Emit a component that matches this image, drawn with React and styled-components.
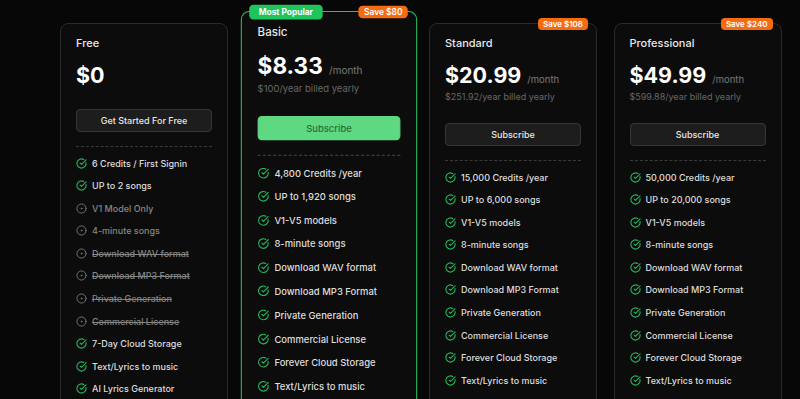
import React from 'react';
import styled, { createGlobalStyle } from 'styled-components';
import { CircleCheckBig, CircleDot } from 'lucide-react';

const plans = [
  {
    name: 'Free',
    price: '$0',
    button: 'Get Started For Free',
    features: [
      ['6 Credits / First Signin', 'yes'],
      ['UP to 2 songs', 'yes'],
      ['V1 Model Only', 'limited'],
      ['4-minute songs', 'limited'],
      ['Download WAV format', 'no'],
      ['Download MP3 Format', 'no'],
      ['Private Generation', 'no'],
      ['Commercial License', 'no'],
      ['7-Day Cloud Storage', 'yes'],
      ['Text/Lyrics to music', 'yes'],
      ['AI Lyrics Generator', 'yes']
    ]
  },
  {
    name: 'Basic',
    price: '$8.33',
    yearly: '$100/year billed yearly',
    save: 'Save $80',
    popular: true,
    button: 'Subscribe',
    credits: '4,800 Credits /year',
    songs: 'UP to 1,920 songs'
  },
  {
    name: 'Standard',
    price: '$20.99',
    yearly: '$251.92/year billed yearly',
    save: 'Save $108',
    button: 'Subscribe',
    credits: '15,000 Credits /year',
    songs: 'UP to 6,000 songs'
  },
  {
    name: 'Professional',
    price: '$49.99',
    yearly: '$599.88/year billed yearly',
    save: 'Save $240',
    button: 'Subscribe',
    credits: '50,000 Credits /year',
    songs: 'UP to 20,000 songs'
  }
];

// rows past the fold are left out
const paidFeatures = p => [
  [p.credits, 'yes'],
  [p.songs, 'yes'],
  ['V1-V5 models', 'yes'],
  ['8-minute songs', 'yes'],
  ['Download WAV format', 'yes'],
  ['Download MP3 Format', 'yes'],
  ['Private Generation', 'yes'],
  ['Commercial License', 'yes'],
  ['Forever Cloud Storage', 'yes'],
  ['Text/Lyrics to music', 'yes']
];

export default function App() {
  return (
    <>
      <GlobalStyle />
      <Page>
        {plans.map(p => (
          <Card key={p.name} popular={p.popular}>
            {p.popular && <PopularBadge>Most Popular</PopularBadge>}
            {p.save && <SaveBadge>{p.save}</SaveBadge>}
            <PlanName>{p.name}</PlanName>
            <PriceRow>
              <Price>{p.price}</Price>
              {p.yearly && <Per>/month</Per>}
            </PriceRow>
            {p.yearly && <Yearly>{p.yearly}</Yearly>}
            <Button primary={p.popular}>{p.button}</Button>
            <Divider />
            <Features>
              {(p.features || paidFeatures(p)).map(([text, state]) => (
                <Feature key={text} state={state}>
                  {state === 'yes' ? (
                    <CircleCheckBig size={11} strokeWidth={2.4} color="#25b35c" />
                  ) : (
                    <CircleDot size={11} strokeWidth={2} color="#7a7a7a" />
                  )}
                  <span>{text}</span>
                </Feature>
              ))}
            </Features>
          </Card>
        ))}
      </Page>
    </>
  );
}

const GlobalStyle = createGlobalStyle`
  html, body {
    margin: 0;
    background: #070707;
    font-family: Inter, "Noto Sans", sans-serif;
    overflow: hidden;
  }
`;

const Page = styled.div`
  display: flex;
  align-items: flex-start;
  gap: 16.5px;
  padding: 23px 0 0 60px;
  height: 399px;
  box-sizing: border-box;
  overflow: hidden;
`;

const Card = styled.div`
  position: relative;
  flex: 0 0 168px;
  box-sizing: border-box;
  height: 460px;
  padding: 10px 15px 0;
  border-radius: 8px;
  background: #0c0c0c;
  border: 1px solid ${props => (props.popular ? '#2fbf5e' : '#2a2a2a')};
  ${props =>
    props.popular &&
    `
    transform: translateY(-12px) scale(1.05);
    transform-origin: top center;
  `}
`;

const Badge = styled.div`
  position: absolute;
  top: -7px;
  height: 13px;
  padding: 0 5px;
  border-radius: 4px;
  color: #fff;
  font-size: 8px;
  font-weight: 600;
  line-height: 13px;
  white-space: nowrap;
`;

const PopularBadge = styled(Badge)`
  left: 7px;
  height: 14px;
  line-height: 14px;
  padding: 0 9px;
  background: #1fc45a;
  font-weight: 700;
`;

const SaveBadge = styled(Badge)`
  right: 8px;
  top: -6px;
  height: 12px;
  line-height: 12px;
  background: #f56b10;
`;

const PlanName = styled.div`
  color: #e8e8e8;
  font-size: 11px;
  font-weight: 500;
  line-height: 18px;
`;

const PriceRow = styled.div`
  display: flex;
  align-items: baseline;
  gap: 6px;
  margin-top: 8px;
  height: 30px;
`;

const Price = styled.span`
  color: #fff;
  font-size: 21.5px;
  font-weight: 700;
  line-height: 30px;
`;

const Per = styled.span`
  color: #7a7a7a;
  font-size: 9.5px;
`;

const Yearly = styled.div`
  color: #676767;
  font-size: 9px;
  line-height: 14px;
`;

const Button = styled.div`
  margin-top: 19px;
  height: 23px;
  box-sizing: border-box;
  display: flex;
  align-items: center;
  justify-content: center;
  border-radius: 4px;
  font-size: 9px;
  font-weight: 500;
  background: ${props => (props.primary ? '#5fd882' : '#1d1d1d')};
  color: ${props => (props.primary ? '#2a6d3d' : '#e6e6e6')};
  border: 1px solid ${props => (props.primary ? '#5fd882' : '#363636')};
`;

const Divider = styled.div`
  margin-top: 14px;
  border-top: 1px dashed #3a3a3a;
`;

const Features = styled.div`
  display: flex;
  flex-direction: column;
  gap: 8.6px;
  margin-top: 9px;
`;

const Feature = styled.div`
  display: flex;
  align-items: center;
  gap: 5px;
  height: 14px;
  font-size: 9px;
  font-weight: 500;
  color: ${props => (props.state === 'yes' ? '#dedede' : '#858585')};
  span {
    text-decoration: ${props => (props.state === 'no' ? 'line-through' : 'none')};
  }
`;
